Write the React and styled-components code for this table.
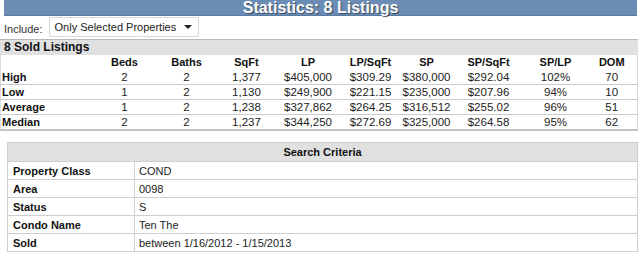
import React from "react";
import styled, { createGlobalStyle } from "styled-components";

const GlobalStyle = createGlobalStyle`
    body {
        margin: 0;
        background: #fff;
        font-family: "Liberation Sans", Arial, sans-serif;
    }
`;

const Page = styled.div`
    width: 638px;
`;

const TitleBar = styled.div`
    margin-left: 4px;
    width: 633px;
    height: 15px;
    background: #6b8db5;
    border-bottom: 1px solid #5a7aa0;
    color: #fff;
    font-weight: bold;
    font-size: 16px;
    line-height: 15px;
    text-align: center;
    text-shadow: 1px 1px 1px #3a4a60;
`;

const FilterRow = styled.div`
    display: flex;
    align-items: center;
    gap: 6px;
    height: 22px;
    padding-left: 4px;
    font-size: 11px;
    color: #333;
`;

const Label = styled.span`
    padding-top: 3px;
`;

const Select = styled.div`
    display: flex;
    align-items: center;
    justify-content: space-between;
    box-sizing: border-box;
    width: 150px;
    height: 20px;
    padding: 0 6px 0 5px;
    border: 1px solid #d8d8d8;
    border-radius: 2px;
    background: #fff;
    color: #222;
    font-size: 11px;
`;

const Caret = styled.span`
    width: 0;
    height: 0;
    border-left: 4px solid transparent;
    border-right: 4px solid transparent;
    border-top: 4px solid #222;
`;

const SectionBar = styled.div`
    height: 15px;
    margin-top: 1px;
    border-top: 1px solid #b8b8b8;
    background: #e0e0e0;
    padding-left: 4px;
    font-size: 12px;
    font-weight: bold;
    line-height: 15px;
    color: #111;
`;

const StatsTable = styled.table`
    width: 637px;
    border-collapse: collapse;
    table-layout: fixed;
    border-left: 1px solid #dcdcdc;
    border-right: 1px solid #dcdcdc;
    border-bottom: 2px solid #c4c4c4;
    font-size: 11px;
    color: #111;
`;

const Col = styled.col`
    width: ${(p) => p.$w}px;
`;

const HeadCell = styled.th`
    height: 15px;
    padding: 0;
    font-weight: bold;
    text-align: center;
    line-height: 15px;
`;

const RowLabel = styled.th`
    padding: 0 0 0 1px;
    text-align: left;
    font-weight: bold;
    line-height: 14px;
`;

const StatRow = styled.tr`
    border-top: ${(p) => (p.$first ? "none" : "1px solid #cbcbcb")};
`;

const Cell = styled.td`
    padding: 0;
    text-align: center;
    font-size: 11.5px;
    line-height: 13px;
    color: #222;
`;

const CriteriaTable = styled.table`
    margin: 11px 0 0 7px;
    width: 630px;
    border-collapse: collapse;
    table-layout: fixed;
    font-size: 11px;
    color: #111;
`;

const CriteriaHead = styled.th`
    height: 18px;
    padding: 0;
    background: #e0e0e0;
    border: 1px solid #cfcfcf;
    font-weight: bold;
    text-align: center;
`;

const CriteriaLabel = styled.td`
    height: 17px;
    padding: 0 0 0 5px;
    border: 1px solid #cfcfcf;
    font-weight: bold;
`;

const CriteriaValue = styled.td`
    padding: 0 0 0 4px;
    border: 1px solid #cfcfcf;
    color: #222;
`;

const columns = [
    { name: "Beds", w: 62 },
    { name: "Baths", w: 62 },
    { name: "SqFt", w: 58 },
    { name: "LP", w: 65 },
    { name: "LP/SqFt", w: 60 },
    { name: "SP", w: 52 },
    { name: "SP/SqFt", w: 72 },
    { name: "SP/LP", w: 62 },
    { name: "DOM", w: 51 },
];

const stats = [
    ["High", "2", "2", "1,377", "$405,000", "$309.29", "$380,000", "$292.04", "102%", "70"],
    ["Low", "1", "2", "1,130", "$249,900", "$221.15", "$235,000", "$207.96", "94%", "10"],
    ["Average", "1", "2", "1,238", "$327,862", "$264.25", "$316,512", "$255.02", "96%", "51"],
    ["Median", "2", "2", "1,237", "$344,250", "$272.69", "$325,000", "$264.58", "95%", "62"],
];

const criteria = [
    ["Property Class", "COND"],
    ["Area", "0098"],
    ["Status", "S"],
    ["Condo Name", "Ten The"],
    ["Sold", "between 1/16/2012 - 1/15/2013"],
];

export default function App() {
    return (
        <Page>
            <GlobalStyle />
            <TitleBar>Statistics: 8 Listings</TitleBar>
            <FilterRow>
                <Label>Include:</Label>
                <Select>
                    <span>Only Selected Properties</span>
                    <Caret />
                </Select>
            </FilterRow>
            <SectionBar>8 Sold Listings</SectionBar>
            <StatsTable>
                <colgroup>
                    <Col $w={93} />
                    {columns.map((c) => (
                        <Col key={c.name} $w={c.w} />
                    ))}
                </colgroup>
                <thead>
                    <tr>
                        <HeadCell />
                        {columns.map((c) => (
                            <HeadCell key={c.name}>{c.name}</HeadCell>
                        ))}
                    </tr>
                </thead>
                <tbody>
                    {stats.map((row, i) => (
                        <StatRow key={row[0]} $first={i === 0}>
                            <RowLabel>{row[0]}</RowLabel>
                            {row.slice(1).map((v, j) => (
                                <Cell key={j}>{v}</Cell>
                            ))}
                        </StatRow>
                    ))}
                </tbody>
            </StatsTable>
            <CriteriaTable>
                <colgroup>
                    <Col $w={127} />
                    <Col $w={503} />
                </colgroup>
                <thead>
                    <tr>
                        <CriteriaHead colSpan={2}>Search Criteria</CriteriaHead>
                    </tr>
                </thead>
                <tbody>
                    {criteria.map(([k, v]) => (
                        <tr key={k}>
                            <CriteriaLabel>{k}</CriteriaLabel>
                            <CriteriaValue>{v}</CriteriaValue>
                        </tr>
                    ))}
                </tbody>
            </CriteriaTable>
        </Page>
    );
}
